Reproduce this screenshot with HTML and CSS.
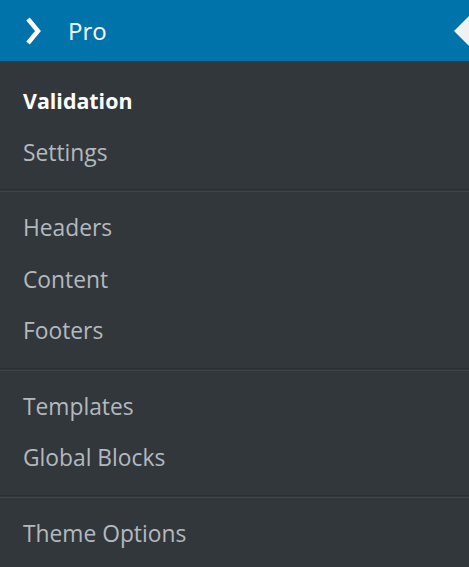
FILE: index.html
```html
<!DOCTYPE html>
<html>
<head>
<meta charset="utf-8">
<link rel="stylesheet" href="styles.css">
</head>
<body>
<nav class="menu">
  <div class="head">
    <svg class="chev" width="18" height="30" viewBox="0 0 18 30"><polyline points="3,3 13,15 3,27" fill="none" stroke="#fff" stroke-width="4.5" stroke-linejoin="miter"/></svg>
    <span class="title">Pro</span>
    <span class="notch"></span>
  </div>
  <ul class="group first">
    <li class="item current">Validation</li>
    <li class="item">Settings</li>
  </ul>
  <div class="sep"></div>
  <ul class="group">
    <li class="item">Headers</li>
    <li class="item">Content</li>
    <li class="item">Footers</li>
  </ul>
  <div class="sep"></div>
  <ul class="group">
    <li class="item">Templates</li>
    <li class="item">Global Blocks</li>
  </ul>
  <div class="sep"></div>
  <ul class="group">
    <li class="item">Theme Options</li>
  </ul>
</nav>
</body>
</html>
```
FILE: styles.css
```css
html, body {
  margin: 0;
  padding: 0;
  background: #32373c;
}
.menu {
  width: 469px;
  height: 567px;
  background: #32373c;
  font-family: "Open Sans", "Noto Sans", sans-serif;
  overflow: hidden;
}
.head {
  position: relative;
  height: 61px;
  background: #0073aa;
  display: flex;
  align-items: center;
}
.chev {
  margin-left: 25px;
  margin-top: 1px;
}
.title {
  margin-left: 25px;
  color: #fff;
  font-size: 24px;
  line-height: 1;
  margin-top: 1px;
}
.notch {
  position: absolute;
  right: 0;
  top: 16px;
  width: 0;
  height: 0;
  border-top: 15px solid transparent;
  border-bottom: 15px solid transparent;
  border-right: 15px solid #f1f1f1;
}
.group {
  list-style: none;
  margin: 0;
  padding: 10px 0 11px;
}
.group.first {
  padding-top: 14px;
}
.item {
  padding-left: 23px;
  font-size: 22.8px;
  line-height: 51.5px;
  color: #b4b9be;
}
.item.current {
  color: #fff;
  font-weight: 700;
  font-size: 21.4px;
}
.sep {
  height: 1px;
  border-top: 1px solid #2a2e32;
  border-bottom: 1px solid #3e4449;
}
```
